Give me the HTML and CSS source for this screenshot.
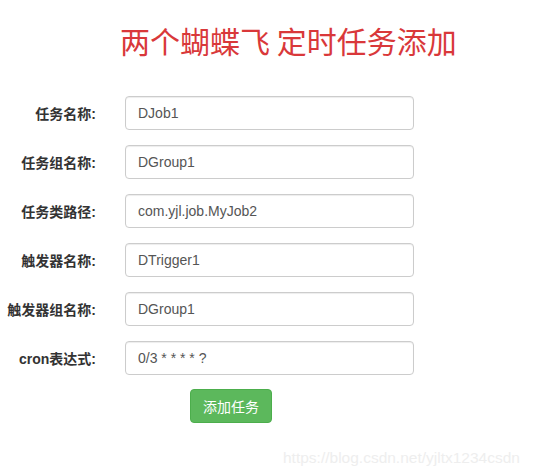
FILE: index.html
```html
<!DOCTYPE html>
<html lang="zh">
<head>
<meta charset="utf-8">
<link rel="stylesheet" href="styles.css">
</head>
<body>
<div class="page">
  <h1 class="title">两个蝴蝶飞 定时任务添加</h1>
  <form class="form">
    <label class="label">任务名称:</label>
    <input class="field" type="text" value="DJob1">
    <label class="label">任务组名称:</label>
    <input class="field" type="text" value="DGroup1">
    <label class="label">任务类路径:</label>
    <input class="field" type="text" value="com.yjl.job.MyJob2">
    <label class="label">触发器名称:</label>
    <input class="field" type="text" value="DTrigger1">
    <label class="label">触发器组名称:</label>
    <input class="field" type="text" value="DGroup1">
    <label class="label">cron表达式:</label>
    <input class="field" type="text" value="0/3 * * * * ?">
  </form>
  <div class="actions">
    <button class="btn" type="button">添加任务</button>
  </div>
  <div class="watermark">https://blog.csdn.net/yjltx1234csdn</div>
</div>
</body>
</html>
```
FILE: styles.css
```css
html, body {
  margin: 0;
  padding: 0;
  background: #fff;
}
.page {
  position: relative;
  width: 533px;
  height: 476px;
  font-family: "Liberation Sans", Arial, "Noto Sans CJK SC", sans-serif;
  color: #333;
}
.title {
  margin: 0;
  padding: 21px 0 0 120px;
  height: 76px;
  box-sizing: border-box;
  font-family: "Noto Sans CJK SC", sans-serif;
  font-weight: 400;
  font-size: 30px;
  line-height: 38px;
  color: #d9383a;
}
.form {
  display: grid;
  grid-template-columns: 96px 289px;
  column-gap: 29px;
  row-gap: 15px;
  margin: 20px 0 0 0;
}
.label {
  justify-self: end;
  align-self: center;
  font-family: "Liberation Sans", Arial, "Noto Sans CJK SC", sans-serif;
  font-weight: 700;
  font-size: 14px;
  color: #333;
  white-space: nowrap;
}
.field {
  box-sizing: border-box;
  width: 289px;
  height: 34px;
  margin: 0;
  padding: 6px 12px;
  border: 1px solid #ccc;
  border-radius: 4px;
  box-shadow: inset 0 1px 1px rgba(0,0,0,.075);
  font-family: "Liberation Sans", Arial, sans-serif;
  font-size: 14px;
  color: #555;
  background: #fff;
}
.actions {
  padding: 14px 0 0 190px;
}
.btn {
  box-sizing: border-box;
  width: 82px;
  height: 34px;
  border: 1px solid #4cae4c;
  border-radius: 4px;
  background: #5cb85c;
  color: #fff;
  font-family: "Noto Sans CJK SC", sans-serif;
  font-size: 14px;
  padding: 0;
}
.watermark {
  position: absolute;
  left: 283px;
  top: 449px;
  font-family: "Liberation Sans", Arial, sans-serif;
  font-size: 15.5px;
  color: #eeeeee;
  white-space: nowrap;
}
```
